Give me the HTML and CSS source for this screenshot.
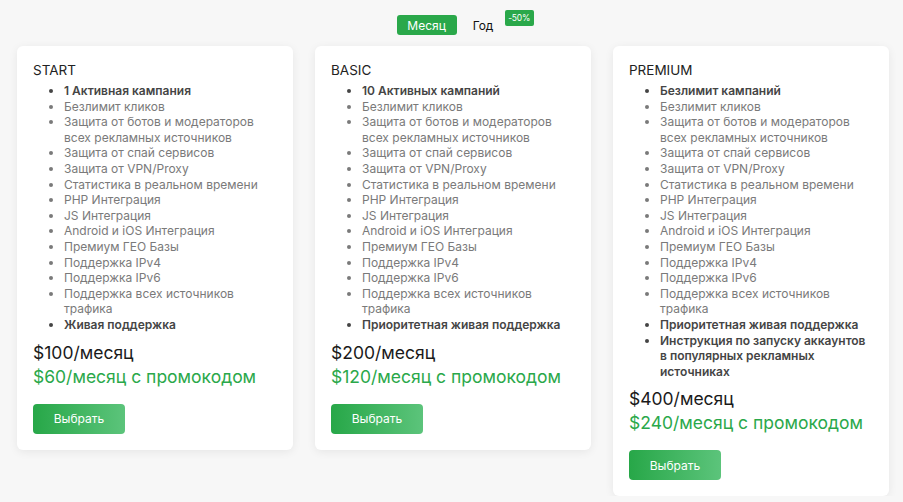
FILE: index.html
```html
<!DOCTYPE html>
<html lang="ru">
<head>
<meta charset="utf-8">
<link rel="stylesheet" href="styles.css">
</head>
<body>
<div class="page">
  <div class="toggle">
    <span class="tab tab-active">Месяц</span>
    <span class="tab tab-year">Год<span class="badge">-50%</span></span>
  </div>
  <div class="plans">
    <div class="card">
      <div class="title">START</div>
      <ul class="features">
        <li class="strong">1 Активная кампания</li>
        <li>Безлимит кликов</li>
        <li>Защита от ботов и модераторов всех рекламных источников</li>
        <li>Защита от спай сервисов</li>
        <li>Защита от VPN/Proxy</li>
        <li>Статистика в реальном времени</li>
        <li>PHP Интеграция</li>
        <li>JS Интеграция</li>
        <li>Android и iOS Интеграция</li>
        <li>Премиум ГЕО Базы</li>
        <li>Поддержка IPv4</li>
        <li>Поддержка IPv6</li>
        <li>Поддержка всех источников трафика</li>
        <li class="strong">Живая поддержка</li>
      </ul>
      <div class="price">$100/месяц</div>
      <div class="promo">$60/месяц с промокодом</div>
      <button class="choose">Выбрать</button>
    </div>
    <div class="card">
      <div class="title">BASIC</div>
      <ul class="features">
        <li class="strong">10 Активных кампаний</li>
        <li>Безлимит кликов</li>
        <li>Защита от ботов и модераторов всех рекламных источников</li>
        <li>Защита от спай сервисов</li>
        <li>Защита от VPN/Proxy</li>
        <li>Статистика в реальном времени</li>
        <li>PHP Интеграция</li>
        <li>JS Интеграция</li>
        <li>Android и iOS Интеграция</li>
        <li>Премиум ГЕО Базы</li>
        <li>Поддержка IPv4</li>
        <li>Поддержка IPv6</li>
        <li>Поддержка всех источников трафика</li>
        <li class="strong">Приоритетная живая поддержка</li>
      </ul>
      <div class="price">$200/месяц</div>
      <div class="promo">$120/месяц с промокодом</div>
      <button class="choose">Выбрать</button>
    </div>
    <div class="card">
      <div class="title">PREMIUM</div>
      <ul class="features">
        <li class="strong">Безлимит кампаний</li>
        <li>Безлимит кликов</li>
        <li>Защита от ботов и модераторов всех рекламных источников</li>
        <li>Защита от спай сервисов</li>
        <li>Защита от VPN/Proxy</li>
        <li>Статистика в реальном времени</li>
        <li>PHP Интеграция</li>
        <li>JS Интеграция</li>
        <li>Android и iOS Интеграция</li>
        <li>Премиум ГЕО Базы</li>
        <li>Поддержка IPv4</li>
        <li>Поддержка IPv6</li>
        <li>Поддержка всех источников трафика</li>
        <li class="strong">Приоритетная живая поддержка</li>
        <li class="strong">Инструкция по запуску аккаунтов в популярных рекламных источниках</li>
      </ul>
      <div class="price">$400/месяц</div>
      <div class="promo">$240/месяц с промокодом</div>
      <button class="choose">Выбрать</button>
    </div>
  </div>
</div>
</body>
</html>
```
FILE: styles.css
```css
html, body {
  margin: 0;
  padding: 0;
  background: #f7f7f7;
}
body {
  font-family: Inter, "DejaVu Sans", sans-serif;
  color: #222;
}
.page {
  padding: 15px 14px 0 17px;
}
.toggle {
  display: flex;
  justify-content: center;
  width: 872px;
  height: 31px;
}
.tab {
  display: flex;
  align-items: center;
  justify-content: center;
  height: 20px;
  font-size: 12px;
  color: #111;
  border-radius: 3px;
}
.tab-active {
  width: 60px;
  background: #2aa84a;
  color: #fff;
}
.tab-year {
  position: relative;
  padding: 0 16px;
}
.badge {
  position: absolute;
  left: 48px;
  top: -5px;
  display: flex;
  align-items: center;
  justify-content: center;
  width: 29px;
  height: 16px;
  background: #2aa84a;
  color: #fff;
  font-size: 8.5px;
  letter-spacing: -0.2px;
  border-radius: 2px;
}
.plans {
  display: flex;
  align-items: flex-start;
  gap: 22px;
}
.card {
  width: 276px;
  box-sizing: border-box;
  background: #fff;
  border-radius: 6px;
  box-shadow: 0 2px 10px rgba(0, 0, 0, 0.07);
  padding: 16px;
}
.title {
  font-size: 13.5px;
  line-height: 17px;
  color: #222;
  margin-bottom: 4px;
}
.features {
  margin: 0;
  padding-left: 31px;
  font-size: 12px;
  line-height: 15.6px;
  color: #7a7a7a;
}
.features li.strong {
  font-weight: 600;
  color: #454545;
}
.price {
  margin-top: 8px;
  font-size: 17.5px;
  line-height: 24px;
  color: #1a1a1a;
}
.promo {
  font-size: 17.5px;
  line-height: 24px;
  color: #2aa84a;
}
.choose {
  display: block;
  margin-top: 15px;
  width: 92px;
  height: 30px;
  border: 0;
  border-radius: 4px;
  background: linear-gradient(90deg, #27a748, #5cc47b);
  color: #fff;
  font-family: inherit;
  font-size: 12px;
}
```
